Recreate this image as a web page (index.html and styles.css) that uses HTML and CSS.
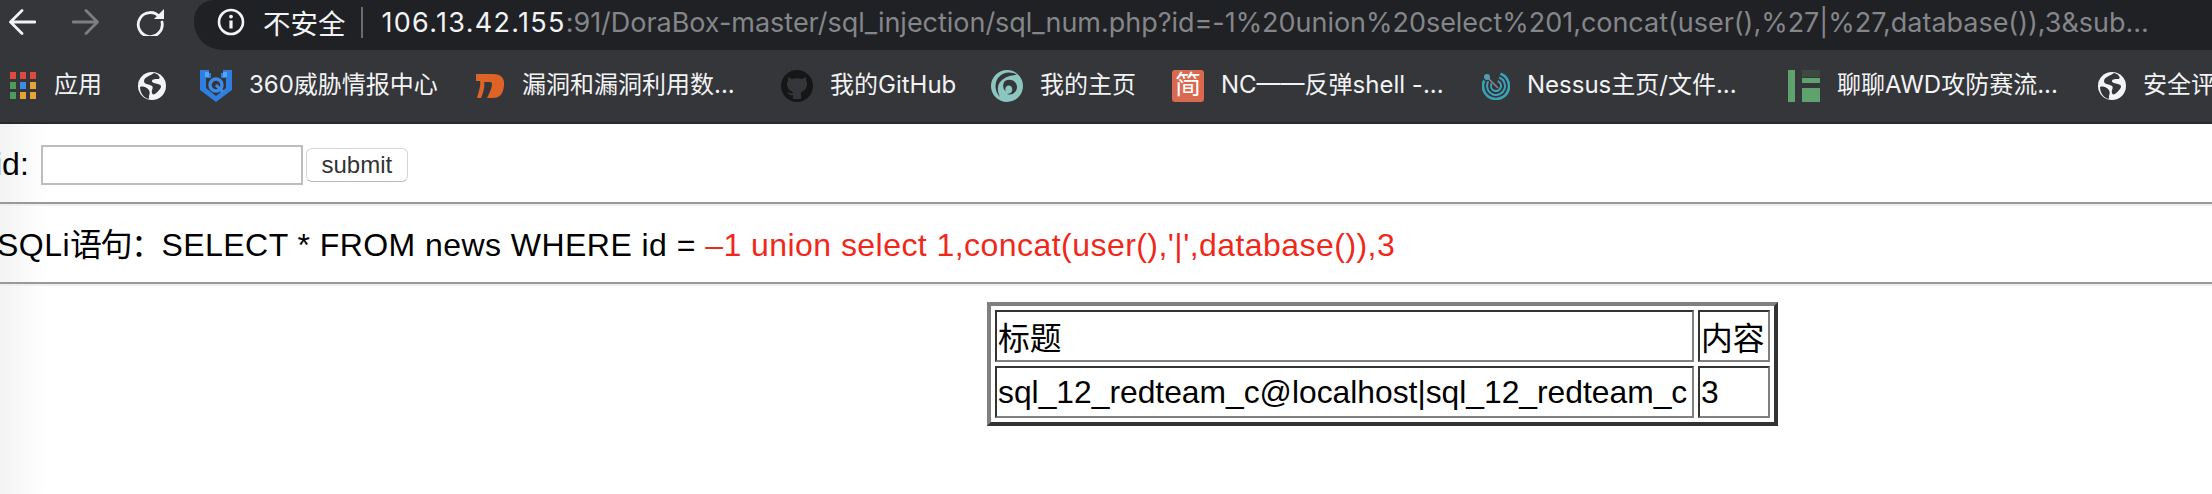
FILE: index.html
```html
<!DOCTYPE html>
<html>
<head>
  <meta charset="utf-8">
  <title>sql_num</title>
  <link rel="stylesheet" href="styles.css">
</head>
<body>
  <div class="toolbar">
    <div class="nav">
      <svg class="nav-icon" viewBox="0 0 28 28"><path d="M27 14H3M14 2.5 2.5 14 14 25.5" fill="none" stroke="#f1f3f4" stroke-width="2.8" stroke-linecap="round" stroke-linejoin="round"/></svg>
      <svg class="nav-icon" viewBox="0 0 28 28"><path d="M1 14h24M14 2.5 25.5 14 14 25.5" fill="none" stroke="#7d7e80" stroke-width="2.8" stroke-linecap="round" stroke-linejoin="round"/></svg>
      <svg class="nav-icon" viewBox="0 0 28 28"><path d="M24 9.5A12 12 0 1 0 26 14" fill="none" stroke="#f1f3f4" stroke-width="2.8" stroke-linecap="round"/><path d="M18 11h10V1z" fill="#f1f3f4"/></svg>
    </div>
    <div class="omnibox">
      <svg class="info-icon" viewBox="0 0 28 28"><circle cx="14" cy="14" r="12" fill="none" stroke="#f1f3f4" stroke-width="2.6"/><circle cx="14" cy="8.6" r="1.9" fill="#f1f3f4"/><path d="M14 12.5v8" stroke="#f1f3f4" stroke-width="3.2"/></svg>
      <span class="insecure">不安全</span>
      <span class="sep"></span>
      <span class="url"><span class="host">106.13.42.155</span>:91/DoraBox-master/sql_injection/sql_num.php?id=-1%20union%20select%201,concat(user(),%27|%27,database()),3&amp;sub...</span>
    </div>
  </div>

  <div class="bookmarks">
    <div class="bm">
      <svg class="fav" viewBox="0 0 28 28">
        <rect x="1" y="0" width="6" height="7" fill="#e0493d"/><rect x="11" y="0" width="6" height="7" fill="#e0493d"/><rect x="21" y="0" width="6" height="7" fill="#e0493d"/>
        <rect x="1" y="10" width="6" height="7" fill="#4f9b5e"/><rect x="11" y="10" width="6" height="7" fill="#3e8ae6"/><rect x="21" y="10" width="6" height="7" fill="#e5a534"/>
        <rect x="1" y="20" width="6" height="7" fill="#4f9b5e"/><rect x="11" y="20" width="6" height="7" fill="#e5a534"/><rect x="21" y="20" width="6" height="7" fill="#e5a534"/>
      </svg>
      <span>应用</span>
    </div>
    <div class="bm">
      <svg class="fav" viewBox="0 0 28 28"><circle cx="14" cy="14" r="14" fill="#f1f3f4"/><path d="M16 1c-4 3-10 4-10 8s6 3 8 5-1 4 0 7 4 1 8-4c2-3 1-4-2-5s-6-1-6-3 4-2 7-2c2-2-1-5-5-6zM2 15c3-1 6 0 8 2s2 4 1 7c0 2 0 3-1 3C5 25 2 20 2 15z" fill="#35363a"/></svg>
    </div>
    <div class="bm">
      <svg class="fav fav-lg" viewBox="0 0 32 32"><path d="M0 0h9v3h2v5h10V3h2V0h9v20L16 32 0 20z" fill="#2f7fe0"/><path d="M5 2h4v5H5zM23 2h4v5h-4z" fill="#55a6f2"/><path d="M6 8h20v10l-10 8-10-8z" fill="#35363a"/><circle cx="16" cy="15" r="6" fill="none" stroke="#3e8ae6" stroke-width="3.4"/><path d="M16 15l7 7" stroke="#3e8ae6" stroke-width="3"/></svg>
      <span>360威胁情报中心</span>
    </div>
    <div class="bm">
      <svg class="fav fav-wide" viewBox="0 0 30 28"><path d="M1 2h17c8 0 12 4 11 12-1 8-4 12-11 12h-6c2-4 5-10 5-14 0-2-2-2-4-2H9c1 3 0 9-3 16H2C4 19 6 13 5 9H1z" fill="#dd6327"/></svg>
      <span>漏洞和漏洞利用数...</span>
    </div>
    <div class="bm">
      <svg class="fav fav-lg" viewBox="0 0 32 32"><circle cx="16" cy="16" r="16" fill="#161616"/><path d="M12 29v-4c-4 1-5-2-6-3 2 0 3 2 6 1 0-2-6-2-6-9 0-2 1-3 1-4V7l4 2c3-1 7-1 10 0l4-2v3c0 1 1 2 1 4 0 7-6 7-6 9v6z" fill="#35363a"/></svg>
      <span>我的GitHub</span>
    </div>
    <div class="bm">
      <svg class="fav fav-lg" viewBox="0 0 32 32"><circle cx="16" cy="16" r="16" fill="#8cc6bf"/><path d="M26 5C20 1 12 2 7 8 3 14 4 22 9 27 6 21 6 15 10 11c4-4 10-6 16-6z" fill="#35363a"/><path d="M14 11c5-3 12 0 12 6 0 5-5 9-10 7 4 0 6-3 5-6s-4-3-6-1c-1 1-1 3 0 4-3-1-4-7-1-10z" fill="#35363a"/></svg>
      <span>我的主页</span>
    </div>
    <div class="bm">
      <span class="fav-jian">简</span>
      <span>NC——反弹shell -...</span>
    </div>
    <div class="bm">
      <svg class="fav" viewBox="0 0 28 28"><g fill="none" stroke="#3aa3b8" stroke-width="2"><circle cx="14" cy="14" r="13" stroke-width="2.6" stroke-dasharray="62 20" transform="rotate(-70 14 14)"/><circle cx="14" cy="14" r="9" stroke-dasharray="44 13" transform="rotate(-70 14 14)"/><circle cx="14" cy="14" r="5" stroke-dasharray="24 8" transform="rotate(-70 14 14)"/></g><circle cx="5" cy="5" r="3" fill="#3aa3b8"/><path d="M3 3l13 13" stroke="#8a8b8d" stroke-width="1.4"/></svg>
      <span>Nessus主页/文件...</span>
    </div>
    <div class="bm">
      <svg class="fav fav-lg" viewBox="0 0 32 32"><path d="M0 0h7v32H0z" fill="#5ea26d"/><path d="M14 0h18v7H14z" fill="#3d4a42"/><path d="M14 8h18v5H14zM14 18h18v14H14z" fill="#5ea26d"/></svg>
      <span>聊聊AWD攻防赛流...</span>
    </div>
    <div class="bm">
      <svg class="fav" viewBox="0 0 28 28"><circle cx="14" cy="14" r="14" fill="#f1f3f4"/><path d="M16 1c-4 3-10 4-10 8s6 3 8 5-1 4 0 7 4 1 8-4c2-3 1-4-2-5s-6-1-6-3 4-2 7-2c2-2-1-5-5-6zM2 15c3-1 6 0 8 2s2 4 1 7c0 2 0 3-1 3C5 25 2 20 2 15z" fill="#35363a"/></svg>
      <span>安全评估</span>
    </div>
  </div>

  <div class="page">
    <form class="search">
      <label>id:</label>
      <input type="text" class="id-input">
      <button type="button" class="submit">submit</button>
    </form>
    <hr>
    <p class="sql">SQLi<span class="sql-cjk">语句：</span>SELECT * FROM news WHERE id = <span class="inject">–1 union select 1,concat(user(),'|',database()),3</span></p>
    <hr>
    <table class="result">
      <tr><td class="col-title">标题</td><td class="col-body">内容</td></tr>
      <tr><td>sql_12_redteam_c@localhost|sql_12_redteam_c</td><td>3</td></tr>
    </table>
  </div>
</body>
</html>
```

FILE: styles.css
```css
* {
  box-sizing: border-box;
}
html, body {
  margin: 0;
  height: 100%;
}
body {
  width: 2212px;
  height: 494px;
  overflow: hidden;
  background: #fff;
  font-family: "Liberation Sans", "Noto Sans CJK SC", sans-serif;
}

.toolbar {
  display: flex;
  height: 50px;
  background: #35363a;
}
.nav {
  display: flex;
  width: 194px;
  padding: 8px 0 0 8px;
  gap: 36px;
}
.nav-icon {
  width: 28px;
  height: 28px;
}
.omnibox {
  flex: 1;
  display: flex;
  align-items: center;
  background: #202124;
  border-radius: 20px 0 0 28px;
  padding: 0 0 6px 23px;
  color: #fff;
  font-family: Inter, "Noto Sans CJK SC", sans-serif;
  white-space: nowrap;
}
.info-icon {
  width: 28px;
  height: 28px;
  flex: none;
}
.insecure {
  font-size: 27.5px;
  margin-left: 18px;
  color: #f1f3f4;
}
.sep {
  width: 2px;
  height: 31px;
  background: #6a6b6e;
  margin: 0 19px 0 15px;
}
.url {
  font-size: 27px;
  letter-spacing: -0.03px;
  color: #84868a;
}
.host {
  letter-spacing: 1.3px;
  color: #f1f3f4;
}

.bookmarks {
  display: grid;
  grid-template-columns: 129px 62px 275px 306px 210px 181px 310px 306px 310px 1fr;
  height: 72px;
  padding: 20px 0 0 9px;
  background: #35363a;
  color: #f1f3f4;
  font-family: Inter, "Noto Sans CJK SC", sans-serif;
  font-size: 24px;
}
.bm {
  display: flex;
  align-items: flex-start;
  gap: 17px;
  white-space: nowrap;
  line-height: 30px;
  overflow: hidden;
}
.fav {
  width: 28px;
  height: 28px;
  flex: none;
  margin-top: 2px;
}
.fav-wide {
  width: 30px;
}
.fav-lg {
  width: 32px;
  height: 32px;
  margin-top: 0;
}
.fav-jian {
  width: 32px;
  height: 32px;
  flex: none;
  background: #d96a50;
  border-radius: 3px;
  color: #fff;
  font-size: 26px;
  line-height: 30px;
  text-align: center;
}

.page {
  height: 372px;
  border-top: 2px solid #28292c;
  background: linear-gradient(to right, #f3f3f3, #fff 46px);
  color: #000;
  font-size: 32px;
}
.search {
  display: flex;
  align-items: flex-start;
  height: 78px;
  padding: 21px 0 0 0;
  margin-left: -5px;
}
.search label {
  line-height: 38px;
  margin-right: 12px;
}
.id-input {
  width: 262px;
  height: 40px;
  margin: 0 3px 0 0;
  border: 2px solid #bdbdbd;
  background: #fff;
}
.submit {
  width: 102px;
  height: 34px;
  margin-top: 3px;
  padding: 0;
  background: #fff;
  border: 1px solid #d5d5d5;
  border-bottom-color: #bbb;
  border-radius: 6px;
  font-family: "Liberation Sans", sans-serif;
  font-size: 24px;
  color: #333;
}
hr {
  height: 4px;
  margin: 0;
  border: 0;
  border-top: 2px solid #999;
  background: #eee;
}
.sql {
  height: 76px;
  margin: 0 0 0 -3px;
  padding: 21px 0 0 0;
  line-height: 36px;
  letter-spacing: 0.45px;
  white-space: nowrap;
}
.sql-cjk {
  letter-spacing: -1.5px;
}
.inject {
  color: #f0281c;
}
.result {
  width: 791px;
  margin: 16px 0 0 987px;
  border-collapse: separate;
  border-spacing: 4px;
  border-width: 4px;
  border-style: solid;
  border-color: #808080 #333 #333 #808080;
  background: #fff;
  font-size: 31.8px;
  table-layout: fixed;
}
.result td {
  height: 52px;
  padding: 0 1px;
  border-width: 2px;
  border-style: solid;
  border-color: #333 #808080 #808080 #333;
  white-space: nowrap;
}
.col-body {
  width: 72px;
}
```
